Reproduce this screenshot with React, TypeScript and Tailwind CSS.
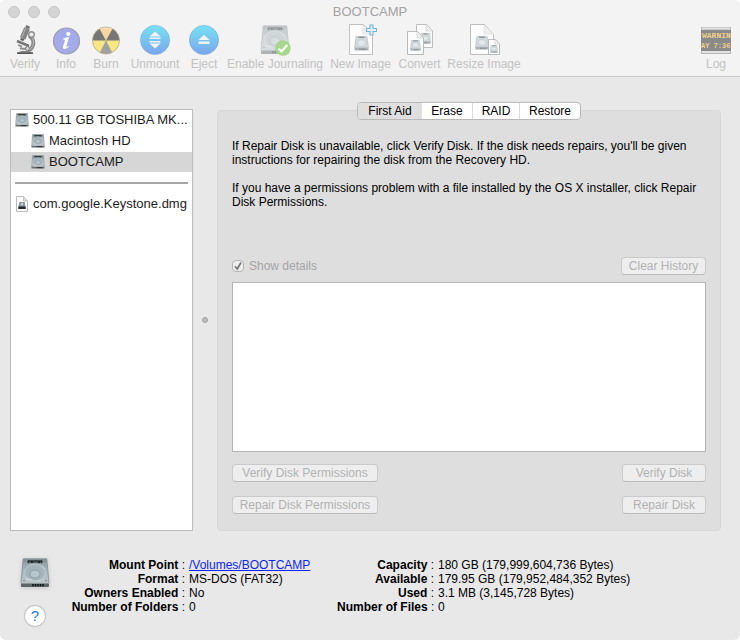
import { useId, type ReactNode } from "react"

function DriveIcon({ className }: { className?: string }) {
  const id = useId()
  return (
    <svg className={className} viewBox="0 0 30 30" aria-hidden="true">
      <defs>
        <linearGradient id={id} x1="0" y1="0" x2="0" y2="1">
          <stop offset="0" stopColor="#84969c" />
          <stop offset="0.5" stopColor="#a9b9bf" />
          <stop offset="1" stopColor="#bcc8cc" />
        </linearGradient>
      </defs>
      <path d="M3.2 0.8h23.6L29 25H1z" fill={`url(#${id})`} stroke="#78858a" strokeWidth="0.7" />
      <path d="M1 25h28v3a1 1 0 0 1-1 1H2a1 1 0 0 1-1-1z" fill="#5c6669" />
      <path d="M1 25h28" stroke="#d3dbde" strokeWidth="0.8" />
      <rect x="7.5" y="2.3" width="15" height="2.8" fill="#22282a" />
      <path d="M9 4.2h2m2 0h5m2 0h1" stroke="#879195" strokeWidth="0.8" />
      <ellipse cx="15" cy="14.5" rx="10.3" ry="8.5" fill="#a4b3b9" stroke="#c9d4d8" strokeWidth="0.7" />
      <ellipse cx="15" cy="16" rx="5" ry="4" fill="#b9c6cb" stroke="#87969c" strokeWidth="0.8" />
      <path d="M6 20.5l6 1.5M22 8l2.5 3" stroke="#dae2e5" strokeWidth="0.8" />
      <path d="M13 26v2.200m2.500-2.200v2.200m2.500-2.200v2.200m2.500-2.200v2.200m2.500-2.200v2.200" stroke="#0d1011" strokeWidth="1.5" />
      <circle cx="4" cy="22.5" r="0.7" fill="#5d686c" />
      <circle cx="26" cy="22.5" r="0.7" fill="#5d686c" />
      <circle cx="5" cy="3" r="0.6" fill="#5d686c" />
      <circle cx="25" cy="3" r="0.6" fill="#5d686c" />
    </svg>
  )
}

// small drive drawn on top of the document icons
function MiniDrive({ x, y, size }: { x: number; y: number; size: number }) {
  return (
    <svg x={x} y={y} width={size} height={size} viewBox="0 0 14 14">
      <path d="M2 0h10l1.5 11h-13z" fill="#d3dadd" stroke="#b3babd" strokeWidth="0.6" />
      <path d="M4 1.2h6" stroke="#8e9496" strokeWidth="1.4" />
      <ellipse cx="7" cy="6.5" rx="3.8" ry="3" fill="#e3e8ea" stroke="#c0c8cb" strokeWidth="0.7" />
      <path d="M0.5 11h13v2.5H0.5z" fill="#adb2b4" />
      <path d="M5 12.3h6" stroke="#858b8d" strokeWidth="1.3" strokeDasharray="1 0.6" />
    </svg>
  )
}

function DmgIcon() {
  return (
    <svg className="h-4 w-3.5 shrink-0" viewBox="0 0 14 16" aria-hidden="true">
      <path d="M1.5 0.5h7l4 4.5v10.5h-11z" fill="#fafafa" stroke="#bdbdbd" />
      <path d="M8.5 0.5v4.5h4" fill="#ddd" stroke="#bdbdbd" strokeWidth="0.8" />
      <path d="M4.3 6h5.4l0.8 5h-7z" fill="#84969d" />
      <path d="M3.3 10.5h7.4v2.5H3.3z" fill="#23282a" />
      <circle cx="7" cy="8.3" r="1.3" fill="#c4d0d4" />
    </svg>
  )
}

function VerifyIcon() {
  return (
    <svg className="h-8 w-8" viewBox="0 0 32 32" aria-hidden="true">
      <path d="M20 12c6 3 6 11-1 15" fill="none" stroke="#8e8e8e" strokeWidth="4" />
      <path d="M21 12c5 3 5 10-1 14" fill="none" stroke="#bcbcbc" strokeWidth="0.9" />
      <g transform="rotate(24 15.5 9.5)">
        <rect x="12.8" y="3.5" width="6" height="11.500" rx="1" fill="#858585" />
        <rect x="13.8" y="1" width="4" height="2.5" fill="#707070" />
        <path d="M14.5 4v10" stroke="#b1b1b1" strokeWidth="1" />
        <path d="M14 15h3.500v2H14z" fill="#606060" />
      </g>
      <circle cx="22.500" cy="10.5" r="2.8" fill="#ececec" stroke="#8e8e8e" strokeWidth="1.4" />
      <path d="M8 17l12 5" stroke="#777" strokeWidth="2.6" />
      <path d="M9 21l4 1.7M11 24.5l8 0.5" stroke="#8c8c8c" strokeWidth="1.8" />
      <circle cx="18.5" cy="24.5" r="2" fill="#d7d7d7" stroke="#777" />
      <path d="M8 28.8c3-2.400 12-2.400 16 0z" fill="#777" />
      <path d="M8 29.2h16" stroke="#555" strokeWidth="1.4" />
    </svg>
  )
}

function InfoIcon() {
  return (
    <svg className="h-8 w-8" viewBox="0 0 32 32" aria-hidden="true">
      <circle cx="16.5" cy="17" r="13" fill="#a3abe9" stroke="#9b9cad" strokeWidth="1.2" />
      <ellipse cx="18.3" cy="10" rx="2.1" ry="1.9" fill="#fff" />
      <path d="M13.2 14.5c2-.8 4-1.2 5.8-1.4l-2.7 9.3c-.2.9.6.8 2-.7l.7.6c-2 2.8-6.8 4.2-6 .5l1.9-6.4c.2-.9-.4-1-1.7-1z" fill="#fff" />
    </svg>
  )
}

function BurnIcon() {
  const id = useId()
  return (
    <svg className="h-8 w-8" viewBox="0 0 32 32" aria-hidden="true">
      <clipPath id={id}><circle cx="16" cy="16.5" r="13.5" /></clipPath>
      <g clipPath={`url(#${id})`}>
        <path d="M0 0h32v32H0z" fill="#f4e784" />
        <path d="M8 0h16l-8 16.5z" fill="#f9d5a4" />
        <path d="M16 16.5L8 2 0 3v13.5zM16 16.5L24 2l8 1v13.5z" fill="#767676" />
        <path d="M16 16.5L8 32h16z" fill="#a1a1a1" />
        <path d="M6 6c5-5 15-5 20 0-6-2-14-2-20 0z" fill="#fff" opacity="0.6" />
        <circle cx="16" cy="16.5" r="1.6" fill="#b9b38c" />
      </g>
      <circle cx="16" cy="16.5" r="13.5" fill="none" stroke="#b7a48c" strokeWidth="0.8" />
    </svg>
  )
}

function BlueCircle({ children }: { children: ReactNode }) {
  const id = useId()
  return (
    <svg className="h-8 w-8" viewBox="0 0 32 32" aria-hidden="true">
      <linearGradient id={id} x1="0" y1="0" x2="0" y2="1">
        <stop offset="0" stopColor="#76e2f6" />
        <stop offset="1" stopColor="#7ba5ec" />
      </linearGradient>
      <circle cx="16" cy="16" r="14.6" fill={`url(#${id})`} stroke="#78a9d8" strokeWidth="0.6" />
      {children}
    </svg>
  )
}

function JournalIcon() {
  return (
    <div className="relative h-8 w-8">
      <DriveIcon className="h-8 w-8 py-px opacity-45" />
      <svg className="absolute top-4 left-4 h-4 w-4" viewBox="0 0 16 16" aria-hidden="true">
        <circle cx="8" cy="8" r="7.7" fill="#a6d78d" />
        <path d="M3.5 8.5l3 3L12.2 5" fill="none" stroke="#fff" strokeWidth="2.2" />
      </svg>
    </div>
  )
}

function NewImageIcon() {
  return (
    <svg className="h-8 w-8" viewBox="0 0 32 32" aria-hidden="true">
      <path d="M4.5 0.5h14l9 10v20h-23z" fill="#fcfcfc" stroke="#c1c1c1" />
      <path d="M18 1v9h9" fill="#eee" stroke="#ddd" strokeWidth="0.7" />
      <MiniDrive x={9} y={12} size={15} />
      <path d="M25 1h3v3.5h3.5v3H28V11h-3V7.5h-3.5v-3H25z" fill="#e3f4fb" stroke="#74b4da" strokeWidth="1.1" />
    </svg>
  )
}

function ConvertIcon() {
  return (
    <svg className="h-8 w-8" viewBox="0 0 32 32" aria-hidden="true">
      <path d="M12.5 0.5h10l6 6.5v16.5h-16z" fill="#fafafa" stroke="#bdbdbd" />
      <path d="M22 1v6h6" fill="#eee" stroke="#d0d0d0" strokeWidth="0.7" />
      <MiniDrive x={16} y={9} size={11} />
      <path d="M3.5 7.5h10l6 6.5v16.5h-16z" fill="#fcfcfc" stroke="#b9b9b9" />
      <path d="M13 8v6h6" fill="#eee" stroke="#d0d0d0" strokeWidth="0.7" />
      <MiniDrive x={6} y={16} size={11} />
    </svg>
  )
}

function ResizeIcon() {
  return (
    <svg className="h-8 w-8" viewBox="0 0 32 32" aria-hidden="true">
      <path d="M2.5 0.5h14l9 10v20h-23z" fill="#fcfcfc" stroke="#bdbdbd" />
      <path d="M16 1v9h9" fill="#eee" stroke="#ddd" strokeWidth="0.7" />
      <MiniDrive x={7} y={12} size={14} />
      <path d="M20.5 15.5h7l4 4.5v10.5h-11z" fill="#fcfcfc" stroke="#b9b9b9" />
      <path d="M27 16v4h4" fill="#eee" stroke="#d0d0d0" strokeWidth="0.7" />
      <MiniDrive x={22} y={21} size={8} />
    </svg>
  )
}

function LogIcon() {
  return (
    <svg className="h-8 w-8" viewBox="0 0 32 32" aria-hidden="true">
      <rect x="1" y="3" width="30" height="27" fill="#b9b9b9" />
      <path d="M2 4.5h28M2 28h28" stroke="#e0e0e0" strokeWidth="2" />
      <rect x="1" y="6" width="30" height="21" fill="#8a8a8a" />
      <g fill="#f0d18c" fontFamily="Liberation Mono, monospace" fontWeight="700">
        <text x="2" y="14" fontSize="8">WARNIN</text>
        <text x="1" y="24" fontSize="7">AY 7:36</text>
      </g>
    </svg>
  )
}

const tools = [
  { label: "Verify", width: "w-[34px]", icon: <VerifyIcon /> },
  { label: "Info", width: "w-8", icon: <InfoIcon /> },
  { label: "Burn", width: "w-8", icon: <BurnIcon /> },
  {
    label: "Unmount",
    width: "w-[50px]",
    icon: (
      <BlueCircle>
        <path d="M10.5 12.5L16 7.5l5.5 5zM10.5 13.5h11V15h-11zM10.5 17h11v1.5h-11zM10.5 19.5h11l-5.5 5z" fill="#f2f3f4" />
      </BlueCircle>
    ),
  },
  {
    label: "Eject",
    width: "w-8",
    icon: (
      <BlueCircle>
        <path d="M10.500 16L16 10.800l5.500 5.200zM10.500 17.500h11v2.500h-11z" fill="#f2f3f4" />
      </BlueCircle>
    ),
  },
  { label: "Enable Journaling", width: "w-[94px]", icon: <JournalIcon /> },
  { label: "New Image", width: "w-[61px]", icon: <NewImageIcon /> },
  { label: "Convert", width: "w-[41px]", icon: <ConvertIcon /> },
  { label: "Resize Image", width: "w-[72px]", icon: <ResizeIcon /> },
]

function ToolButton({ label, width, icon }: { label: string; width: string; icon: ReactNode }) {
  return (
    <button type="button" disabled className={`flex shrink-0 flex-col items-center whitespace-nowrap text-[#c2c2c2] ${width}`}>
      {icon}
      <span className="leading-4">{label}</span>
    </button>
  )
}

function PushButton({ children, className }: { children: ReactNode; className: string }) {
  return (
    <button
      type="button"
      disabled
      className={`h-[18px] rounded border border-[#cacaca] border-b-[#bcbcbc] bg-[#eeeeee] leading-4 whitespace-nowrap text-[#b2b2b2] ${className}`}
    >
      {children}
    </button>
  )
}

function Row({ label, children }: { label: string; children: ReactNode }) {
  return (
    <>
      <dt className="text-right font-bold whitespace-nowrap">
        {label} <span className="font-normal">:</span>
      </dt>
      <dd>{children}</dd>
    </>
  )
}

export default function App() {
  return (
    <div className="min-h-screen bg-white font-['Liberation_Sans',Arial,sans-serif] text-xs leading-[14px] text-black">
      <div className="flex min-h-screen flex-col overflow-hidden rounded-md bg-[#e8e8e8]">
        <header className="border-b border-[#c9cbcb] bg-[#f3f3f3] pb-1">
          <div className="flex h-6 items-center pl-2">
            <div className="flex flex-1 gap-2">
              <span className="size-3 rounded-full border border-[#c5c5c5] bg-[#d5d5d5]" />
              <span className="size-3 rounded-full border border-[#c5c5c5] bg-[#d5d5d5]" />
              <span className="size-3 rounded-full border border-[#c5c5c5] bg-[#d5d5d5]" />
            </div>
            <h1 className="text-[13px] text-[#a3a3a3]">BOOTCAMP</h1>
            <div className="flex-1 pr-2" />
          </div>
          <div className="flex gap-2 px-2">
            {tools.map((tool) => (
              <ToolButton key={tool.label} {...tool} />
            ))}
            <div className="flex-1" />
            <ToolButton label="Log" width="w-8" icon={<LogIcon />} />
          </div>
        </header>

        <main className="flex pt-8 pr-[19px] pl-2.5">
          {/* Disks */}
          <ul className="flex w-[183px] shrink-0 flex-col gap-px border border-[#bcbcbc] bg-white text-[13px] leading-5 whitespace-nowrap text-[#1c1c1c]">
            <li className="flex h-5 items-center gap-1 pl-1">
              <DriveIcon className="size-3.5 shrink-0" />
              500.11 GB TOSHIBA MK...
            </li>
            <li className="flex h-5 items-center gap-1 pl-5">
              <DriveIcon className="size-3.5 shrink-0" />
              Macintosh HD
            </li>
            <li className="flex h-5 items-center gap-1 bg-[#d6d6d6] pl-5">
              <DriveIcon className="size-3.5 shrink-0" />
              BOOTCAMP
            </li>
            <li className="flex h-5 items-center px-1">
              <hr className="w-full border-t-2 border-[#a6a6a6]" />
            </li>
            <li className="flex h-5 items-center gap-1 pl-1">
              <DmgIcon />
              com.google.Keystone.dmg
            </li>
          </ul>

          <div className="flex w-6 shrink-0 items-center justify-center">
            <span className="size-1.5 rounded-full border border-[#a5a5a5] bg-[#bcbcbc]" />
          </div>

          {/* First Aid */}
          <section className="mt-px flex min-w-0 flex-1 flex-col rounded border border-[#d7d7d7] bg-[#dedede] px-3.5 pb-4">
            <div role="tablist" className="-mt-[9px] flex h-[18px] self-center rounded border border-[#b9b9b9] bg-white leading-4">
              <button type="button" role="tab" aria-selected="true" className="w-16 rounded-l bg-[#dfdfdf]">First Aid</button>
              <button type="button" role="tab" aria-selected="false" className="w-[50px]">Erase</button>
              <button type="button" role="tab" aria-selected="false" className="w-[47px] border-l border-[#dcdcdc]">RAID</button>
              <button type="button" role="tab" aria-selected="false" className="w-[61px] border-l border-[#dcdcdc]">Restore</button>
            </div>

            <div className="mt-[19px] h-[118px]">
              <p>
                If Repair Disk is unavailable, click Verify Disk. If the disk needs repairs, you'll be given instructions for repairing the disk from the Recovery HD.
              </p>
              <p className="mt-3.5">
                If you have a permissions problem with a file installed by the OS X installer, click Repair Disk Permissions.
              </p>
            </div>

            <div className="flex items-center justify-between">
              <label className="flex items-center gap-[5px] text-[#a5a5a5]">
                <span className="grid size-3">
                  <input type="checkbox" defaultChecked disabled className="col-start-1 row-start-1 size-3 appearance-none rounded-sm border border-[#b5b5b5] bg-[#eeeeee]" />
                  <svg className="col-start-1 row-start-1 size-3" viewBox="0 0 12 12" aria-hidden="true">
                    <path d="M3 6.3l2.2 2.7L9 2.5" fill="none" stroke="#777" strokeWidth="1.7" />
                  </svg>
                </span>
                Show details
              </label>
              <PushButton className="w-[85px]">Clear History</PushButton>
            </div>

            <textarea readOnly aria-label="Details" className="mt-[7px] h-[170px] w-full resize-none border border-[#b5b5b5] bg-white p-1 outline-none" />

            <div className="mt-3 flex justify-between">
              <PushButton className="w-[146px]">Verify Disk Permissions</PushButton>
              <PushButton className="w-[84px]">Verify Disk</PushButton>
            </div>
            <div className="mt-3.5 flex justify-between">
              <PushButton className="w-[146px]">Repair Disk Permissions</PushButton>
              <PushButton className="w-[84px]">Repair Disk</PushButton>
            </div>
          </section>
        </main>

        <footer className="flex pt-[27px] pb-3">
          <div className="flex w-[70px] shrink-0 flex-col items-center gap-[18px]">
            <DriveIcon className="size-[30px] drop-shadow-sm" />
            <button type="button" aria-label="Help" className="size-5 rounded-full bg-white text-[15px] leading-5 text-[#1a7df5] shadow-[0_0_1px_1px_#c2c2c2]">
              ?
            </button>
          </div>
          <dl className="grid w-[267px] shrink-0 grid-cols-[115px_1fr] content-start gap-x-1">
            <Row label="Mount Point">
              <a href="#" className="text-[#0b24fb] underline">/Volumes/BOOTCAMP</a>
            </Row>
            <Row label="Format">MS-DOS (FAT32)</Row>
            <Row label="Owners Enabled">No</Row>
            <Row label="Number of Folders">0</Row>
          </dl>
          <dl className="grid grid-cols-[97px_1fr] content-start gap-x-1">
            <Row label="Capacity">180 GB (179,999,604,736 Bytes)</Row>
            <Row label="Available">179.95 GB (179,952,484,352 Bytes)</Row>
            <Row label="Used">3.1 MB (3,145,728 Bytes)</Row>
            <Row label="Number of Files">0</Row>
          </dl>
        </footer>
      </div>
    </div>
  )
}
